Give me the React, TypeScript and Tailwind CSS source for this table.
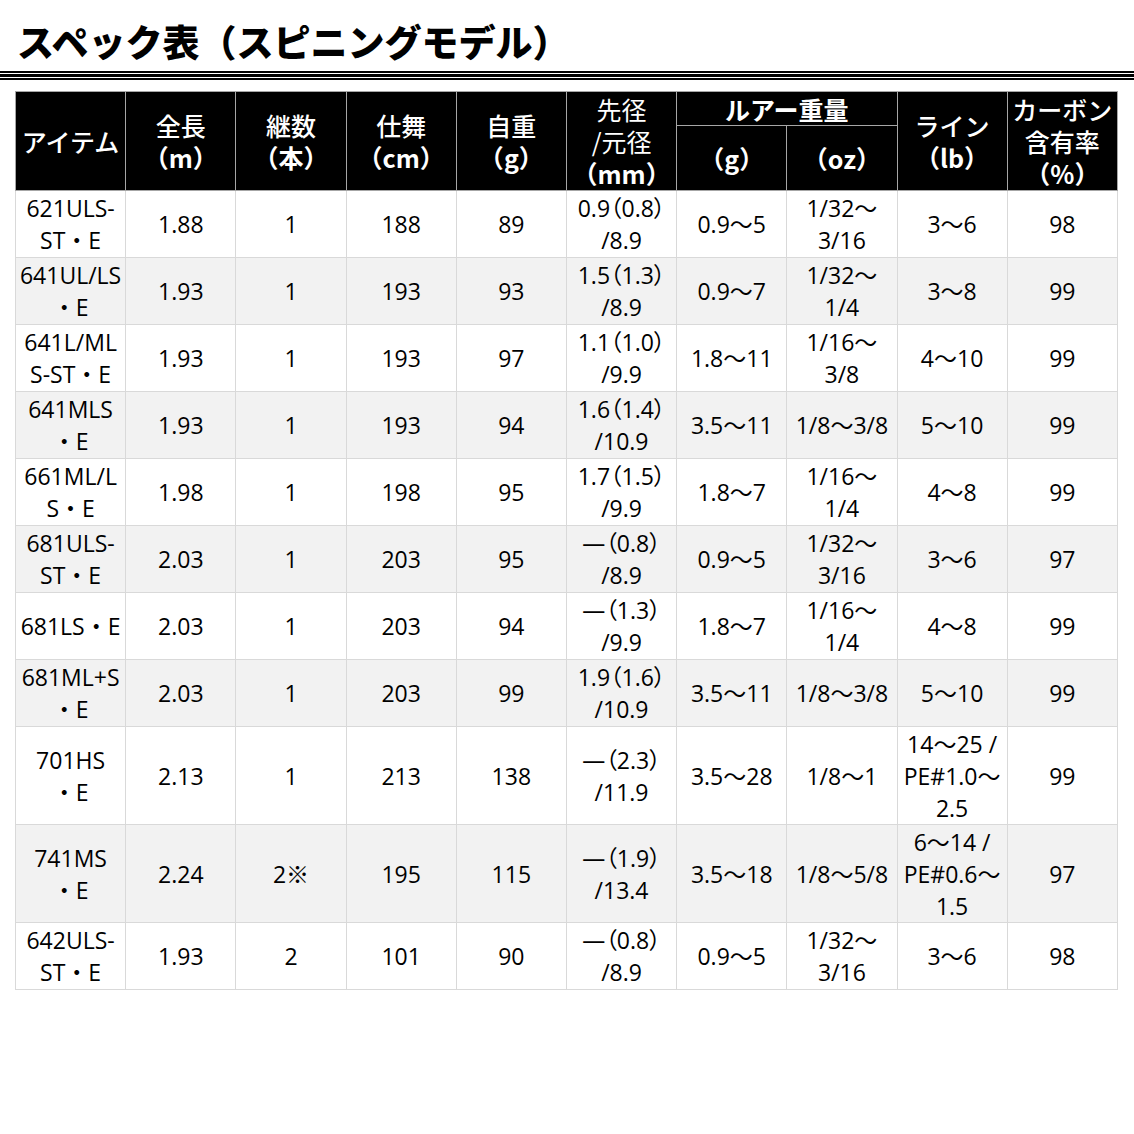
const P = ({ s, tight = true }: { s: string; tight?: boolean }) => {
  // 全角カッコは詰めて表示
  const parts = s.split(/([（）])/);
  return (
    <>
      {parts.map((p, i) =>
        tight && (p === "（" || p === "）") ? (
          <span key={i} className="[font-feature-settings:'palt']">
            {p}
          </span>
        ) : (
          <span key={i}>{p}</span>
        )
      )}
    </>
  );
};

const Lines = ({ v }: { v: string[] }) => (
  <>
    {v.map((l, i) => (
      <div key={i} className="whitespace-nowrap">
        <P s={l} />
      </div>
    ))}
  </>
);

type Row = { cells: string[][]; tall?: boolean };

const rows: Row[] = [
  { cells: [["621ULS-", "ST・E"], ["1.88"], ["1"], ["188"], ["89"], ["0.9（0.8）", "/8.9"], ["0.9〜5"], ["1/32〜", "3/16"], ["3〜6"], ["98"]] },
  { cells: [["641UL/LS", "・E"], ["1.93"], ["1"], ["193"], ["93"], ["1.5（1.3）", "/8.9"], ["0.9〜7"], ["1/32〜", "1/4"], ["3〜8"], ["99"]] },
  { cells: [["641L/ML", "S-ST・E"], ["1.93"], ["1"], ["193"], ["97"], ["1.1（1.0）", "/9.9"], ["1.8〜11"], ["1/16〜", "3/8"], ["4〜10"], ["99"]] },
  { cells: [["641MLS", "・E"], ["1.93"], ["1"], ["193"], ["94"], ["1.6（1.4）", "/10.9"], ["3.5〜11"], ["1/8〜3/8"], ["5〜10"], ["99"]] },
  { cells: [["661ML/L", "S・E"], ["1.98"], ["1"], ["198"], ["95"], ["1.7（1.5）", "/9.9"], ["1.8〜7"], ["1/16〜", "1/4"], ["4〜8"], ["99"]] },
  { cells: [["681ULS-", "ST・E"], ["2.03"], ["1"], ["203"], ["95"], ["―（0.8）", "/8.9"], ["0.9〜5"], ["1/32〜", "3/16"], ["3〜6"], ["97"]] },
  { cells: [["681LS・E"], ["2.03"], ["1"], ["203"], ["94"], ["―（1.3）", "/9.9"], ["1.8〜7"], ["1/16〜", "1/4"], ["4〜8"], ["99"]] },
  { cells: [["681ML+S", "・E"], ["2.03"], ["1"], ["203"], ["99"], ["1.9（1.6）", "/10.9"], ["3.5〜11"], ["1/8〜3/8"], ["5〜10"], ["99"]] },
  { tall: true, cells: [["701HS", "・E"], ["2.13"], ["1"], ["213"], ["138"], ["―（2.3）", "/11.9"], ["3.5〜28"], ["1/8〜1"], ["14〜25 /", "PE#1.0〜", "2.5"], ["99"]] },
  { tall: true, cells: [["741MS", "・E"], ["2.24"], ["2※"], ["195"], ["115"], ["―（1.9）", "/13.4"], ["3.5〜18"], ["1/8〜5/8"], ["6〜14 /", "PE#0.6〜", "1.5"], ["97"]] },
  { cells: [["642ULS-", "ST・E"], ["1.93"], ["2"], ["101"], ["90"], ["―（0.8）", "/8.9"], ["0.9〜5"], ["1/32〜", "3/16"], ["3〜6"], ["98"]] },
];

const th =
  "border border-[#a6a6a6] bg-black text-white font-medium p-0 text-center align-middle text-[25px] leading-[32px] font-['Noto_Sans_CJK_JP',sans-serif]";

// 見出し: 1行目は通常、単位行は太字
const H = ({ v, unit }: { v: string[]; unit?: string }) => (
  <>
    {v.map((l, i) => (
      <div key={i} className="whitespace-nowrap">
        <P s={l} tight={false} />
      </div>
    ))}
    {unit && (
      <div className="whitespace-nowrap font-bold">
        <P s={unit} tight={false} />
      </div>
    )}
  </>
);

export default function App() {
  return (
    <div className="w-[1134px] h-[1134px] bg-white text-black font-['Open_Sans','Noto_Sans_CJK_JP',sans-serif]">
      {/* タイトル */}
      <h1 className="pt-[18px] pl-[17px] text-[37px] leading-[47px] font-black font-['Noto_Sans_CJK_JP',sans-serif]">
        スペック表（スピニングモデル）
      </h1>

      {/* 三重線 */}
      <div className="mt-[6px]">
        <div className="h-[2px] bg-black" />
        <div className="mt-[1px] h-[3px] bg-black" />
        <div className="mt-[1px] h-[2px] bg-black" />
      </div>

      <table className="ml-[15px] mt-[11px] w-[1103px] table-fixed border-collapse text-[23px] leading-[32px]">
        <thead>
          <tr className="h-[34px]">
            <th rowSpan={2} className={th}>
              <H v={["アイテム"]} />
            </th>
            <th rowSpan={2} className={th}>
              <H v={["全長"]} unit="（m）" />
            </th>
            <th rowSpan={2} className={th}>
              <H v={["継数"]} unit="（本）" />
            </th>
            <th rowSpan={2} className={th}>
              <H v={["仕舞"]} unit="（cm）" />
            </th>
            <th rowSpan={2} className={th}>
              <H v={["自重"]} unit="（g）" />
            </th>
            <th rowSpan={2} className={`${th} !font-normal`}>
              <H v={["先径", "/元径"]} unit="（mm）" />
            </th>
            <th colSpan={2} className={`${th} !font-bold`}>
              <H v={["ルアー重量"]} />
            </th>
            <th rowSpan={2} className={th}>
              <H v={["ライン"]} unit="（lb）" />
            </th>
            <th rowSpan={2} className={th}>
              <H v={["カーボン", "含有率"]} unit="（%）" />
            </th>
          </tr>
          <tr className="h-[65px]">
            <th className={th}>
              <H v={[]} unit="（g）" />
            </th>
            <th className={th}>
              <H v={[]} unit="（oz）" />
            </th>
          </tr>
        </thead>
        <tbody>
          {rows.map((r, i) => (
            <tr
              key={i}
              className={`${r.tall ? "h-[98px]" : "h-[67px]"} ${i % 2 === 1 ? "bg-[#f2f2f2]" : "bg-white"}`}
            >
              {r.cells.map((c, j) => (
                <td key={j} className="border border-[#d9d9d9] p-0 text-center align-middle">
                  <Lines v={c} />
                </td>
              ))}
            </tr>
          ))}
        </tbody>
      </table>
    </div>
  );
}
